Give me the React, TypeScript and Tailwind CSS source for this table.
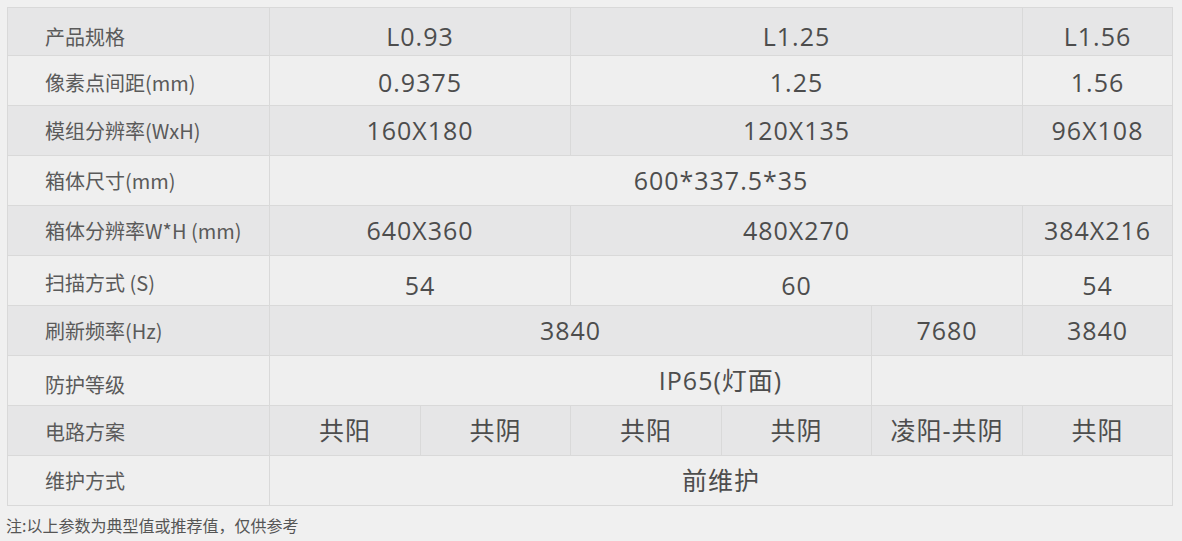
import React from "react";

type Cell = { text: string; span?: number; cls?: string };
type Row = { label: string; cells: Cell[]; labelCls?: string; cls?: string };

const rows: Row[] = [
  {
    label: "产品规格",
    cls: "pt-[10px]",
    cells: [
      { text: "L0.93", span: 2 },
      { text: "L1.25", span: 3 },
      { text: "L1.56" },
    ],
  },
  {
    label: "像素点间距(mm)",
    cls: "pt-[4px]",
    cells: [
      { text: "0.9375", span: 2 },
      { text: "1.25", span: 3 },
      { text: "1.56" },
    ],
  },
  {
    label: "模组分辨率(WxH)",
    cells: [
      { text: "160X180", span: 2 },
      { text: "120X135", span: 3 },
      { text: "96X108" },
    ],
  },
  {
    label: "箱体尺寸(mm)",
    cells: [{ text: "600*337.5*35", span: 6 }],
  },
  {
    label: "箱体分辨率W*H (mm)",
    cells: [
      { text: "640X360", span: 2 },
      { text: "480X270", span: 3 },
      { text: "384X216" },
    ],
  },
  {
    label: "扫描方式 (S)",
    labelCls: "pt-[4px]",
    cls: "pt-[9px]",
    cells: [
      { text: "54", span: 2 },
      { text: "60", span: 3 },
      { text: "54" },
    ],
  },
  {
    label: "刷新频率(Hz)",
    cells: [
      { text: "3840", span: 4 },
      { text: "7680" },
      { text: "3840" },
    ],
  },
  {
    label: "防护等级",
    labelCls: "pt-[8px]",
    cells: [
      { text: "IP65(灯面)", span: 4, cls: "pl-[300px]" },
      { text: "", span: 2 },
    ],
  },
  {
    label: "电路方案",
    labelCls: "pt-[2px]",
    cells: [
      { text: "共阳" },
      { text: "共阴" },
      { text: "共阳" },
      { text: "共阴" },
      { text: "凌阳-共阴" },
      { text: "共阳" },
    ],
  },
  {
    label: "维护方式",
    cells: [{ text: "前维护", span: 6 }],
  },
];

const widths = ["w-[262px]", "w-[151px]", "w-[150px]", "w-[151px]", "w-[150px]", "w-[151px]", "w-[150px]"];

export default function App() {
  return (
    <div className="min-h-[541px] w-[1182px] bg-[#f0f0f0] pt-[7px] pl-[7px]">
      <table className="w-[1166px] table-fixed border-collapse border border-[#cacaca]">
        <colgroup>
          {widths.map((w, i) => (
            <col key={i} className={w} />
          ))}
        </colgroup>
        <tbody>
          {rows.map((r, i) => (
            <tr key={r.label} className={i % 2 === 0 ? "bg-[#e6e6e7]" : "bg-[#efefef]"}>
              <td
                className={`border border-[#d9d9d9] pl-[37px] text-left whitespace-nowrap text-[20px] leading-none text-[#5a5a5a] font-['Noto_Sans_CJK_SC',sans-serif] ${
                  i === 0 ? "h-[48px]" : "h-[50px]"
                } ${r.labelCls ?? r.cls ?? ""}`}
              >
                {r.label}
              </td>
              {r.cells.map((c, j) => (
                <td
                  key={j}
                  colSpan={c.span ?? 1}
                  className={`border border-[#d9d9d9] text-center whitespace-nowrap text-[25px] leading-none tracking-[1px] text-[#4d4d4d] font-['Open_Sans','Noto_Sans_CJK_SC',sans-serif] ${
                    r.cls ?? ""
                  } ${c.cls ?? ""}`}
                >
                  {c.text}
                </td>
              ))}
            </tr>
          ))}
        </tbody>
      </table>
      <p className="mt-[11px] -ml-[1px] text-[16px] leading-none text-[#555] font-['Noto_Sans_CJK_SC',sans-serif]">
        注:以上参数为典型值或推荐值，仅供参考
      </p>
    </div>
  );
}
